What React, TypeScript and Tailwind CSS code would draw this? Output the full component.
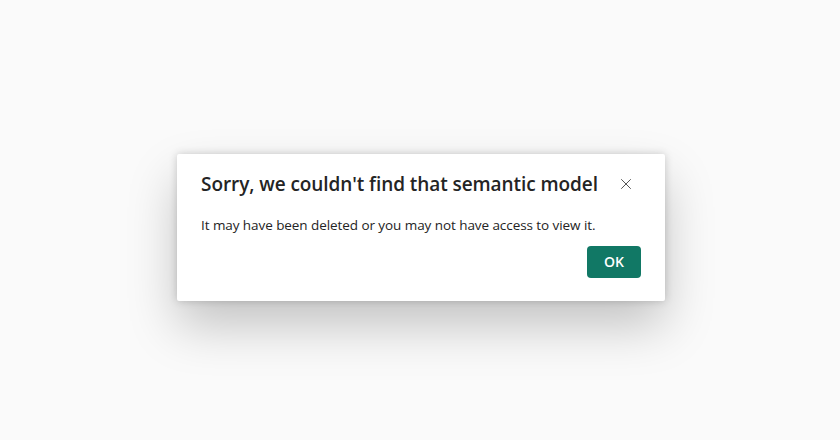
import { X } from 'lucide-react';

export default function App() {
  return (
    <div
      className="flex h-[440px] w-full items-center justify-center bg-[#fafafa]"
      style={{ fontFamily: '"Open Sans", "Noto Sans", sans-serif' }}
    >
      <div className="ml-[2px] mt-[14px] w-[488px] rounded-[2px] bg-white px-6 pb-[23px] pt-[16px] shadow-[0_25px_50px_rgba(0,0,0,0.22),0_0_8px_rgba(0,0,0,0.18)]">
        <div className="flex items-center justify-between">
          <h2 className="text-[19px] font-semibold leading-7 tracking-[-0.07px] text-[#242424]">
            Sorry, we couldn't find that semantic model
          </h2>
          <button className="mr-[3px] flex h-6 w-6 items-center justify-center text-[#424242]">
            <X className="h-[18px] w-[18px]" strokeWidth={1.2} />
          </button>
        </div>
        <p className="mt-[17px] text-[13.5px] leading-5 tracking-[-0.07px] text-[#242424]">
          It may have been deleted or you may not have access to view it.
        </p>
        <div className="mt-[11px] flex justify-end">
          <button className="h-8 w-[54px] rounded-[4px] bg-[#117865] text-[14px] font-semibold text-white">
            OK
          </button>
        </div>
      </div>
    </div>
  );
}
